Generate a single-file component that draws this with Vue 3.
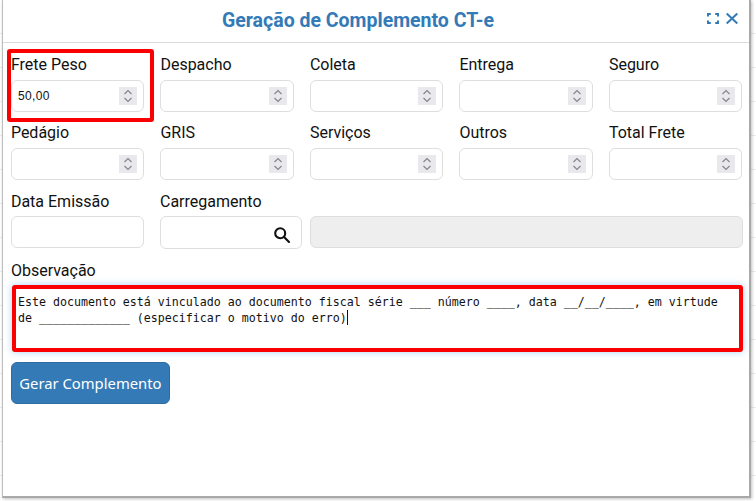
<script setup>
const rows = [
  [
    { label: 'Frete Peso', value: '50,00', marked: true },
    { label: 'Despacho', value: '' },
    { label: 'Coleta', value: '' },
    { label: 'Entrega', value: '' },
    { label: 'Seguro', value: '' }
  ],
  [
    { label: 'Pedágio', value: '' },
    { label: 'GRIS', value: '' },
    { label: 'Serviços', value: '' },
    { label: 'Outros', value: '' },
    { label: 'Total Frete', value: '' }
  ]
]
</script>

<template>
  <div class="page">
    <section class="modal">
      <header class="head">
        <h1 class="title">Geração de Complemento CT-e</h1>
        <div class="tools">
          <svg width="12" height="11" viewBox="0 0 12 11" fill="none" stroke="#337ab7" stroke-width="2">
            <path d="M1 3.5V1H3.8M8.2 1H11V3.5M11 7.5V10H8.2M3.8 10H1V7.5" />
          </svg>
          <svg width="12" height="11" viewBox="0 0 12 11" fill="none" stroke="#337ab7" stroke-width="2">
            <path d="M0.7 0.5L11.3 10.5M11.3 0.5L0.7 10.5" />
          </svg>
        </div>
      </header>

      <div class="body">
        <div v-for="(row, r) in rows" :key="r" class="grid">
          <div v-for="f in row" :key="f.label" class="field" :class="{ marked: f.marked }">
            <label class="lbl">{{ f.label }}</label>
            <div class="box num">
              <span class="val">{{ f.value }}</span>
              <span class="spin">
                <svg width="18" height="18" viewBox="0 0 18 18" fill="none" stroke="#85858a" stroke-width="1.2">
                  <path d="M5.5 7L9 3.6L12.5 7M5.5 11L9 14.4L12.5 11" />
                </svg>
              </span>
            </div>
          </div>
        </div>

        <div class="third">
          <div class="field date">
            <label class="lbl">Data Emissão</label>
            <div class="box tall"></div>
          </div>
          <div class="field carr">
            <label class="lbl">Carregamento</label>
            <div class="box tall search">
              <svg class="lens" width="18" height="18" viewBox="0 0 18 18" fill="none" stroke="#111" stroke-width="2.1">
                <circle cx="7.2" cy="7.2" r="5" />
                <path d="M10.8 10.8L16 16" stroke-linecap="round" />
              </svg>
            </div>
          </div>
          <div class="field wide">
            <div class="box tall off"></div>
          </div>
        </div>

        <label class="lbl obs-lbl">Observação</label>
        <div class="obs">Este documento está vinculado ao documento fiscal série ___ número ____, data __/__/____, em virtude de _____________ (especificar o motivo do erro)<span class="caret"></span></div>

        <button class="btn" type="button">Gerar Complemento</button>
      </div>
    </section>
  </div>
</template>

<style>
html, body { margin: 0; background: #fff; }
</style>

<style scoped>
.page {
  width: 756px;
  height: 501px;
  overflow: hidden;
  background: repeating-linear-gradient(180deg, #fff 0, #fff 33px, #ececec 33px, #ececec 34px);
  padding: 0 0 0 2px;
  box-sizing: border-box;
}
.modal {
  width: 749px;
  height: 498px;
  box-sizing: border-box;
  background: #fff;
  border-left: 1px solid #bdbdbd;
  border-right: 2px solid #a9a9a9;
  border-bottom: 2px solid #a9a9a9;
  box-shadow: 1px 1px 3px rgba(0, 0, 0, 0.25);
  font-family: Roboto, "Liberation Sans", sans-serif;
  color: #111;
}
.head {
  height: 42px;
  border-bottom: 1px solid #dcdcdc;
  padding-right: 36px;
  display: flex;
  align-items: center;
  justify-content: center;
  position: relative;
}
.title {
  margin: 0 0 1px;
  font-size: 19.5px;
  line-height: 24px;
  font-weight: 700;
  color: #337ab7;
}
.tools {
  position: absolute;
  right: 11px;
  top: 13px;
  display: flex;
  gap: 7px;
  align-items: flex-start;
}
.body {
  padding: 11px 8px 0 7.9px;
  display: flex;
  flex-direction: column;
}
.grid {
  display: grid;
  grid-template-columns: repeat(5, 133.5px);
  column-gap: 16px;
  height: 68px;
}
.field {
  position: relative;
  min-width: 0;
}
.marked::after {
  content: "";
  position: absolute;
  left: -4px;
  top: -5px;
  width: 139px;
  height: 65px;
  border: 4px solid #fa0000;
  border-radius: 3px;
  pointer-events: none;
}
.lbl {
  display: block;
  font-size: 16px;
  line-height: 22px;
  height: 26px;
  color: #111;
}
.box {
  box-sizing: border-box;
  border: 1px solid #dedede;
  border-radius: 6px;
  background: #fff;
  display: flex;
  align-items: center;
}
.num {
  height: 32px;
  padding: 0 6px;
  justify-content: space-between;
}
.val {
  font-family: "Liberation Sans", sans-serif;
  font-size: 12px;
  letter-spacing: 0.4px;
  color: #111;
}
.spin {
  width: 18px;
  height: 18px;
  background: #e9e9ed;
  display: flex;
}
.third {
  display: flex;
  height: 70px;
}
.third .lbl { line-height: 24px; }
.date { flex: none; width: 133.5px; margin-right: 15.6px; }
.carr { flex: none; width: 142px; margin-right: 8.4px; }
.wide { flex: none; width: 433px; padding-top: 26px; }
.tall { height: 32px; }
.search {
  height: 33px;
  justify-content: flex-end;
  padding-right: 10px;
}
.lens { margin-top: 5px; }
.off { background: #eeeeee; }
.obs-lbl { height: 25px; }
.obs {
  box-sizing: border-box;
  width: 731px;
  height: 67px;
  margin-left: 1px;
  padding: 6px 4px 0 2px;
  border: 4px solid #fa0000;
  border-radius: 3px;
  box-shadow: 0 0 7px rgba(102, 175, 233, 0.55);
  font-family: "DejaVu Sans Mono", monospace;
  font-size: 11.63px;
  line-height: 15px;
  color: #111;
  white-space: pre-wrap;
  background: #fff;
}
.caret {
  display: inline-block;
  width: 1px;
  height: 15px;
  background: #111;
  vertical-align: -3px;
}
.btn {
  box-sizing: border-box;
  margin-top: 10px;
  width: 159px;
  height: 42px;
  padding: 0;
  background: #337ab7;
  border: 1px solid #2e6da4;
  border-radius: 6px;
  color: #fff;
  font-family: "Noto Sans", sans-serif;
  font-size: 14.8px;
}
</style>
